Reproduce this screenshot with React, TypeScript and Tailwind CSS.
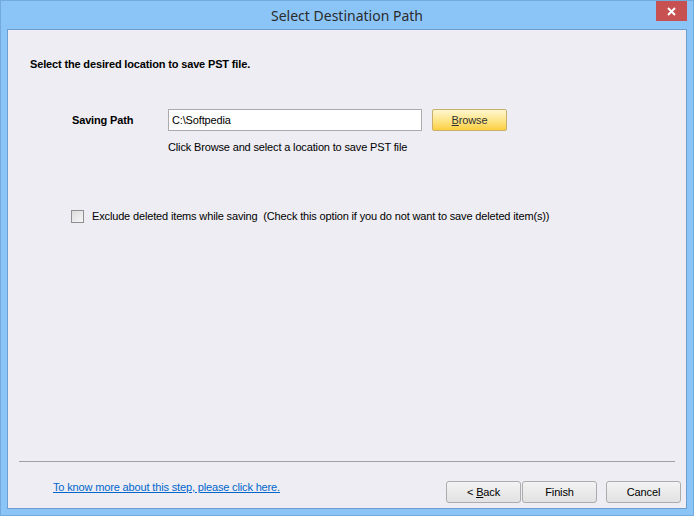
import React, { useState } from 'react';

const ui = { fontFamily: '"Liberation Sans", Arial, sans-serif' };
const title = { fontFamily: '"Noto Sans", "Open Sans", sans-serif' };

function WinButton({ label, accel, rest }: { label?: string; accel?: string; rest: string }) {
  return (
    <button className="h-[22px] w-[75px] rounded-[3px] border border-[#acacac] bg-gradient-to-b from-[#f3f3f3] to-[#e2e2e2] text-[11px] text-black leading-none">
      {label}
      {accel && <span className="underline">{accel}</span>}
      {rest}
    </button>
  );
}

export default function App() {
  const [exclude, setExclude] = useState(false);

  return (
    <div className="relative flex h-[516px] w-[694px] flex-col border border-[#74a9dc] bg-[#8bc5f8]" style={ui}>
      {/* Title bar */}
      <div className="flex h-[28px] items-center justify-center text-[14px] text-[#2b2b2b]" style={title}>
        Select Destination Path
      </div>
      <button className="absolute right-[6px] top-0 flex h-[20px] w-[31px] items-center justify-center bg-[#c75050]">
        <svg width="9" height="9" viewBox="0 0 9 9">
          <path d="M1 1 L8 8 M8 1 L1 8" stroke="#fff" strokeWidth="2" />
        </svg>
      </button>

      {/* Client area */}
      <div className="mx-[6px] mb-[6px] flex flex-1 flex-col border border-[#6c9fd0] bg-[#eeedf3] text-[11px] tracking-[-0.15px] text-black">
        <div className="ml-[22px] mt-[28px] text-[11px] font-bold leading-[13px]">
          Select the desired location to save PST file.
        </div>

        <div className="mt-[38px] flex h-[22px] items-center">
          <div className="ml-[64px] w-[96px] font-bold">Saving Path</div>
          <div className="flex h-[22px] w-[254px] items-center border border-[#ababab] bg-white pl-[3px]">C:\Softpedia</div>
          <button className="ml-[10px] h-[22px] w-[75px] rounded-[2px] border border-[#c8b06c] bg-gradient-to-b from-[#fff6cf] via-[#fde68a] to-[#fccf3c] text-[11px] text-[#333]">
            <span className="underline">B</span>rowse
          </button>
        </div>

        <div className="ml-[160px] mt-[10px] leading-[13px]">Click Browse and select a location to save PST file</div>

        <div className="mt-[56px] flex h-[13px] items-center">
          <button
            onClick={() => setExclude(!exclude)}
            className="ml-[63px] flex h-[13px] w-[13px] items-center justify-center border border-[#8f8f8f] bg-gradient-to-br from-[#dcdcdc] to-[#f7f7f7]"
          >
            {exclude && (
              <svg width="9" height="9" viewBox="0 0 9 9">
                <path d="M1 4.5 L3.5 7 L8 1.5" stroke="#222" strokeWidth="1.6" fill="none" />
              </svg>
            )}
          </button>
          <span className="ml-[8px]">
            Exclude deleted items while saving&nbsp;&nbsp;(Check this option if you do not want to save deleted item(s))
          </span>
        </div>

        <div className="flex-1" />

        <div className="mx-[11px] h-px bg-[#a0a0a0]" />

        <div className="mb-[5px] mt-[19px] flex h-[22px] items-center">
          <a href="#" className="mb-[10px] ml-[45px] text-[#0066cc] underline">
            To know more about this step, please click here.
          </a>
          <div className="flex-1" />
          <div className="flex">
            <WinButton label="< " accel="B" rest="ack" />
            <div className="ml-px">
              <WinButton rest="Finish" />
            </div>
            <div className="ml-[9px]">
              <WinButton rest="Cancel" />
            </div>
          </div>
          <div className="w-[5px]" />
        </div>
      </div>
    </div>
  );
}
